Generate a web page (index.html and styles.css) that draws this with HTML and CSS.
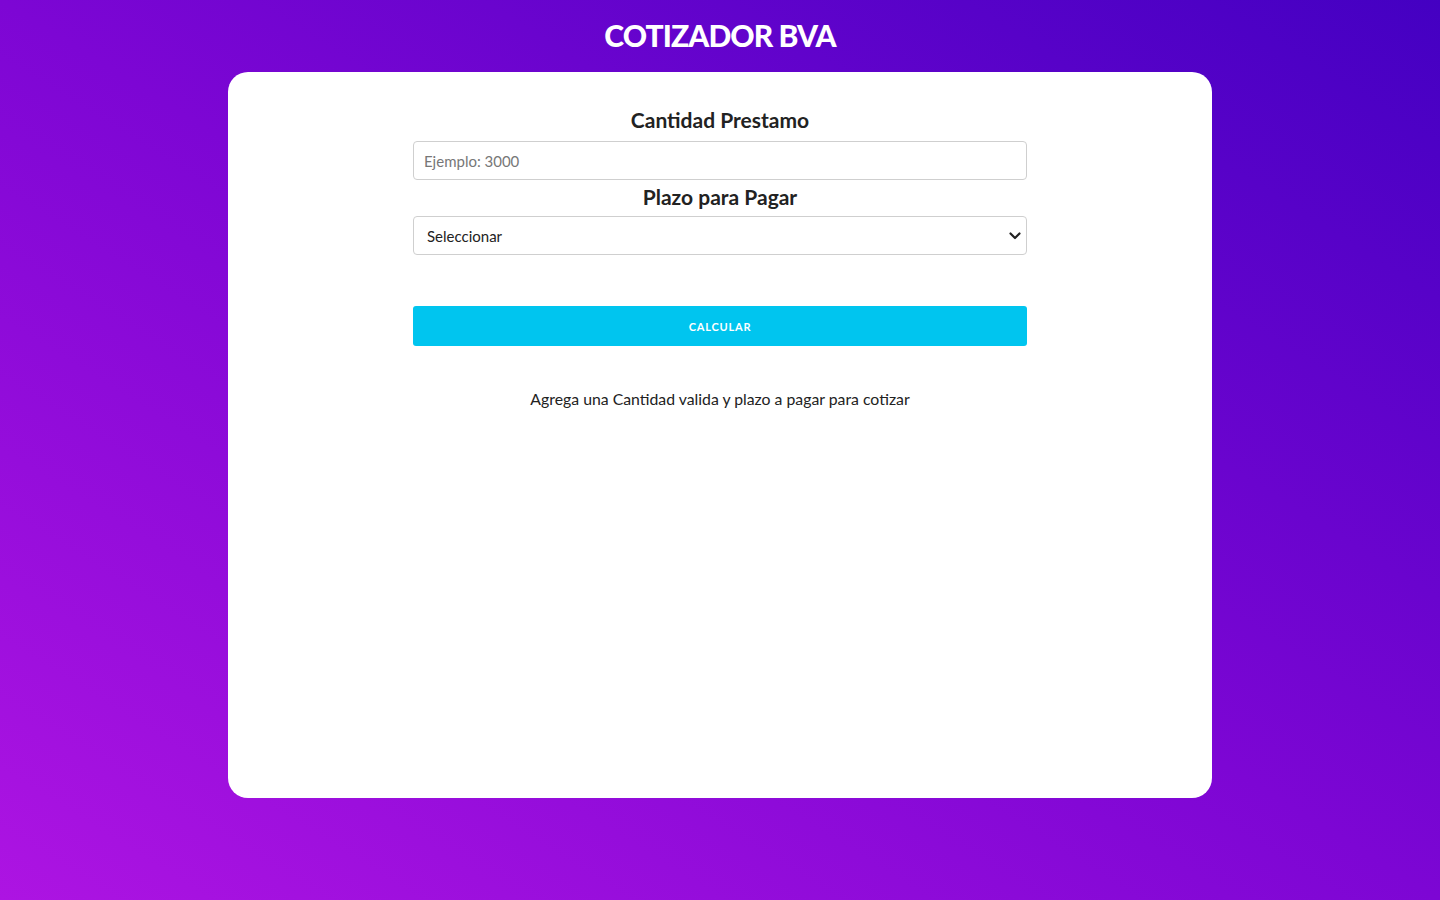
FILE: index.html
```html
<!DOCTYPE html>
<html lang="es">
<head>
<meta charset="utf-8">
<title>Cotizador BVA</title>
<link rel="stylesheet" href="styles.css">
</head>
<body>
  <h1 class="title">COTIZADOR BVA</h1>
  <main class="card">
    <form class="form">
      <label class="label" for="cantidad">Cantidad Prestamo</label>
      <input class="field" id="cantidad" type="text" placeholder="Ejemplo: 3000">
      <label class="label label-second" for="plazo">Plazo para Pagar</label>
      <div class="select-wrap">
        <select class="field select" id="plazo">
          <option>Seleccionar</option>
        </select>
        <svg class="chevron" width="12" height="8" viewBox="0 0 12 8" aria-hidden="true">
          <path d="M1.5 1.5 L6 6 L10.5 1.5" fill="none" stroke="#222" stroke-width="2.2" stroke-linecap="round" stroke-linejoin="round"/>
        </svg>
      </div>
      <button class="btn" type="button">CALCULAR</button>
      <p class="message">Agrega una Cantidad valida y plazo a pagar para cotizar</p>
    </form>
  </main>
</body>
</html>
```
FILE: styles.css
```css
* { box-sizing: border-box; }
html, body { height: 100%; }
body {
  margin: 0;
  min-height: 900px;
  font-family: Lato, "Open Sans", Arial, sans-serif;
  background: linear-gradient(to top right, #ad14e2 0%, #7d06d4 50%, #4400c2 100%);
  display: flex;
  flex-direction: column;
  align-items: center;
}
.title {
  margin: 15px 0 17px;
  line-height: 40px;
  font-size: 30px;
  font-weight: 900;
  color: #fff;
  letter-spacing: -0.9px;
}
.card {
  width: 984px;
  height: 726px;
  background: #fff;
  border-radius: 20px;
  display: flex;
  justify-content: center;
}
.form {
  width: 614px;
  padding-top: 34px;
  display: flex;
  flex-direction: column;
  align-items: stretch;
}
.label {
  text-align: center;
  font-size: 21px;
  font-weight: 700;
  color: #222;
  line-height: 28px;
  margin-bottom: 7px;
  letter-spacing: 0;
}
.label-second { margin-top: 3px; margin-bottom: 5px; }
.field {
  width: 100%;
  height: 39px;
  border: 1px solid #cfcfcf;
  border-radius: 4px;
  font-family: inherit;
  font-size: 15px;
  color: #222;
  background: #fff;
  padding: 0 10px;
  outline: none;
}
.field::placeholder { color: #777; }
.select-wrap { position: relative; }
.select {
  appearance: none;
  -webkit-appearance: none;
  padding-left: 13px;
}
.chevron {
  position: absolute;
  right: 6px;
  top: 16px;
}
.btn {
  margin-top: 51px;
  height: 40px;
  border: none;
  border-radius: 3px;
  background: #00c5ef;
  color: #fff;
  font-family: inherit;
  font-size: 11px;
  font-weight: 700;
  letter-spacing: 0.8px;
}
.message {
  margin: 43px 0 0;
  text-align: center;
  font-size: 15.8px;
  color: #222;
  line-height: 20px;
}
```
